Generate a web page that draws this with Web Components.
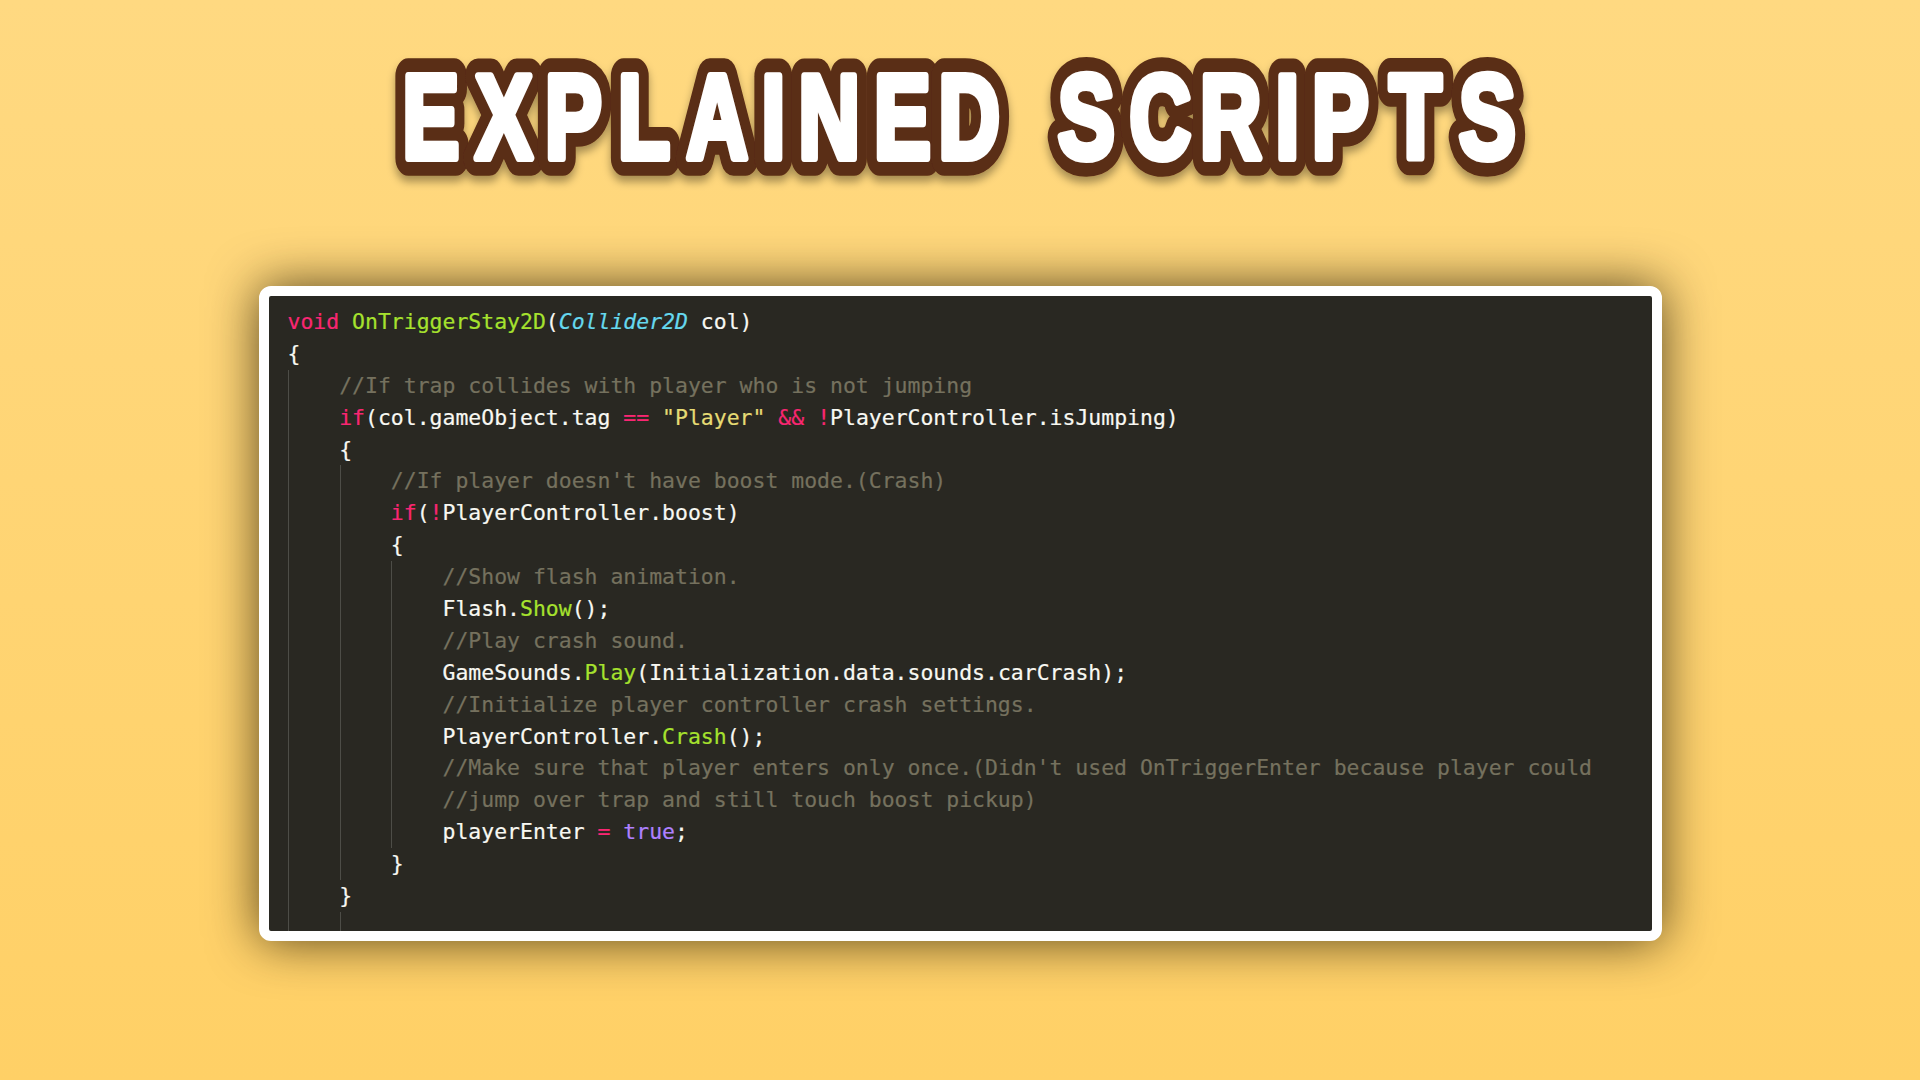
<!DOCTYPE html>
<html>
<head>
<meta charset="utf-8">
<style>
  html, body { margin: 0; height: 100%; }
  body {
    width: 1920px;
    height: 1080px;
    overflow: hidden;
    background: linear-gradient(#ffd981, #ffd066);
    display: flex;
    flex-direction: column;
    align-items: center;
  }
</style>
</head>
<body>
<banner-title>EXPLAINED SCRIPTS</banner-title>
<code-card>
  <code-line><span class="k">void</span> <span class="f">OnTriggerStay2D</span>(<span class="t">Collider2D</span> col)</code-line>
  <code-line>{</code-line>
  <code-line guides="1"><span class="c">    //If trap collides with player who is not jumping</span></code-line>
  <code-line guides="1">    <span class="k">if</span>(col.gameObject.tag <span class="k">==</span> <span class="s">"Player"</span> <span class="k">&amp;&amp;</span> <span class="k">!</span>PlayerController.isJumping)</code-line>
  <code-line guides="1">    {</code-line>
  <code-line guides="2"><span class="c">        //If player doesn't have boost mode.(Crash)</span></code-line>
  <code-line guides="2">        <span class="k">if</span>(<span class="k">!</span>PlayerController.boost)</code-line>
  <code-line guides="2">        {</code-line>
  <code-line guides="3"><span class="c">            //Show flash animation.</span></code-line>
  <code-line guides="3">            Flash.<span class="f">Show</span>();</code-line>
  <code-line guides="3"><span class="c">            //Play crash sound.</span></code-line>
  <code-line guides="3">            GameSounds.<span class="f">Play</span>(Initialization.data.sounds.carCrash);</code-line>
  <code-line guides="3"><span class="c">            //Initialize player controller crash settings.</span></code-line>
  <code-line guides="3">            PlayerController.<span class="f">Crash</span>();</code-line>
  <code-line guides="3"><span class="c">            //Make sure that player enters only once.(Didn't used OnTriggerEnter because player could</span></code-line>
  <code-line guides="3"><span class="c">            //jump over trap and still touch boost pickup)</span></code-line>
  <code-line guides="3">            playerEnter <span class="k">=</span> <span class="v">true</span>;</code-line>
  <code-line guides="2">        }</code-line>
  <code-line guides="1">    }</code-line>
  <code-line guides="2"></code-line>
</code-card>
<script>
// left edge of each letter in page pixels, the space keeps a dummy value
const LETTER_X = [402.5, 475.5, 545, 618, 686.5, 761.5, 798.5, 874, 938.5, 1000,
  1058, 1129.5, 1200, 1275.5, 1312, 1389.5, 1459];
const SQUEEZE = 0.72;

class BannerTitle extends HTMLElement {
  constructor() {
    super();
    const root = this.attachShadow({ mode: "open" });
    const xs = LETTER_X.map((x) => (x / SQUEEZE).toFixed(1)).join(" ");
    root.innerHTML = `
      <style>
        :host { display: block; width: 1920px; height: 286px; }
        svg { display: block; }
        text {
          font-family: "Liberation Sans", sans-serif;
          font-weight: 700;
          font-size: 118px;
          stroke-linejoin: round;
          paint-order: stroke;
        }
        use, text { vector-effect: non-scaling-stroke; }
      </style>
      <svg width="1920" height="286">
        <defs>
          <text id="t" y="158" x="${xs}" transform="scale(${SQUEEZE} 1)"></text>
          <filter id="sh" x="-5%" y="-20%" width="110%" height="150%">
            <feDropShadow dx="0" dy="6" stdDeviation="4" flood-color="#000" flood-opacity=".35"/>
          </filter>
        </defs>
        <g filter="url(#sh)"><use href="#t" fill="#5a2d15" stroke="#5a2d15" stroke-width="31"/></g>
        <use href="#t" fill="#fff" stroke="#fff" stroke-width="7"/>
      </svg>`;
    root.getElementById("t").textContent = this.textContent;
  }
}
customElements.define("banner-title", BannerTitle);

class CodeCard extends HTMLElement {
  constructor() {
    super();
    this.attachShadow({ mode: "open" }).innerHTML = `
      <style>
        :host {
          display: block;
          box-sizing: border-box;
          width: 1403px;
          height: 655px;
          border: 10px solid #fff;
          border-radius: 12px;
          background: #292822;
          box-shadow: 0 0 50px rgba(30, 20, 0, .75);
          overflow: hidden;
        }
        .body { padding: 10px 0 0 19px; }
      </style>
      <div class="body"><slot></slot></div>`;
  }
}
customElements.define("code-card", CodeCard);

const lineSheet = `
  :host {
    display: block;
    height: 31.9px;
    line-height: 31.9px;
    white-space: pre;
    font-family: "DejaVu Sans Mono", "Liberation Mono", monospace;
    font-size: 21.46px;
    -webkit-text-stroke: .2px;
    color: #f8f8f2;
    background-image: repeating-linear-gradient(90deg, #4d4d47 0 1px, transparent 1px 51.7px);
    background-repeat: no-repeat;
    background-size: calc(var(--g, 0) * 51.7px) 100%;
  }
`;
class CodeLine extends HTMLElement {
  constructor() {
    super();
    const root = this.attachShadow({ mode: "open" });
    root.innerHTML = `<style>${lineSheet}</style><slot></slot>`;
    this.style.setProperty("--g", this.getAttribute("guides") || 0);
  }
}
customElements.define("code-line", CodeLine);
</script>
<style>
  code-line .k { color: #f92672; }
  code-line .f { color: #a6e22e; }
  code-line .t { color: #66d9ef; font-style: italic; }
  code-line .s { color: #e6db74; }
  code-line .c { color: #75715e; }
  code-line .v { color: #ae81ff; }
</style>
</body>
</html>
